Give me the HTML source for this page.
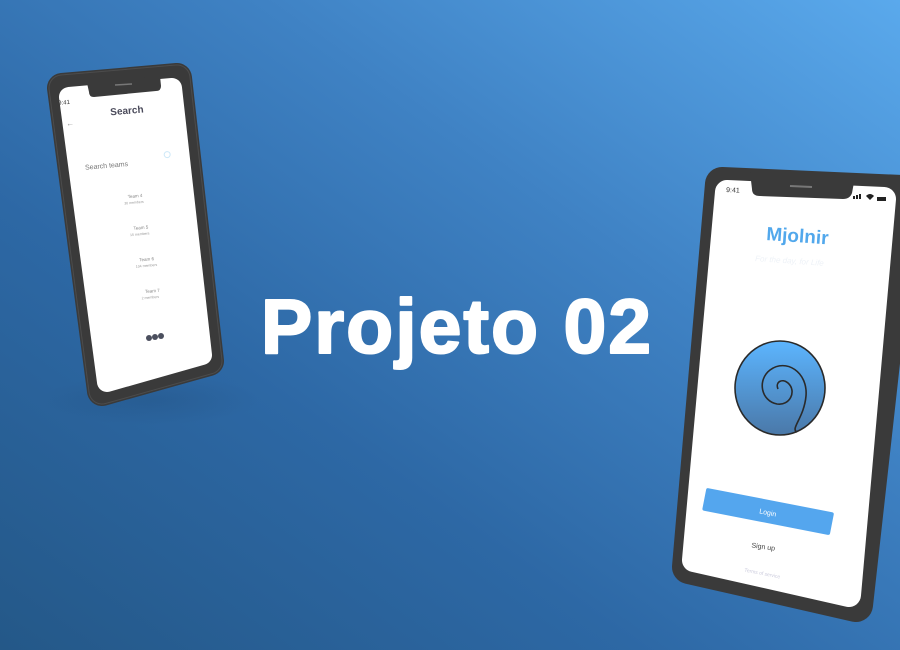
<!DOCTYPE html>
<html><head><meta charset="utf-8"><style>
html,body{margin:0;padding:0;width:900px;height:650px;overflow:hidden}
body{background:linear-gradient(215deg,#5aa9ec 0%,#3f82c4 35%,#2d68a5 65%,#245888 100%)}
svg{position:absolute;left:0;top:0}
text{font-family:"Liberation Sans",sans-serif}
</style></head><body>
<svg width="900" height="650" viewBox="0 0 900 650">
<defs>
<linearGradient id="ball" x1="0" y1="0" x2="0" y2="1">
<stop offset="0" stop-color="#5cb5ff"/><stop offset="1" stop-color="#4a78a8"/></linearGradient>
<radialGradient id="sh" cx="0.5" cy="0.5" r="0.5"><stop offset="0" stop-color="#1b3f66" stop-opacity="0.2"/><stop offset="1" stop-color="#1b3f66" stop-opacity="0"/></radialGradient>
</defs>
<ellipse cx="150" cy="400" rx="110" ry="25" fill="url(#sh)"/>
<!-- left phone -->
<polygon points="62,88 177,78 209,361 102,391" fill="#3a3a3a" stroke="#3a3a3a" stroke-width="30" stroke-linejoin="round"/>
<polygon points="62,88 177,78 209,361 102,391" fill="none" stroke="#5e5e5e" stroke-width="27" stroke-linejoin="round" stroke-opacity="0.5"/>
<polygon points="62,88 177,78 209,361 102,391" fill="#3a3a3a" stroke="#3a3a3a" stroke-width="25" stroke-linejoin="round"/>
<polygon points="69,97 172,88 202,355 107,382" fill="#fff" stroke="#fff" stroke-width="20" stroke-linejoin="round"/>
<path d="M87,83 L160,76 L161,86 Q161,91 156,91 L94,97 Q89,97 89,92 Z" fill="#3a3a3a"/>
<line x1="115" y1="85" x2="132" y2="84" stroke="#777" stroke-width="1.5"/>
<g transform="rotate(-5 130 200)" fill="#555">
<text x="67" y="99" font-size="6" fill="#333">9:41</text>
<text x="118" y="114" font-size="10" font-weight="bold" fill="#4a4a5a">Search</text>
<text x="73" y="121" font-size="8" fill="#999">←</text>
<text x="88" y="166" font-size="7" fill="#777">Search teams</text>
<circle cx="171" cy="158" r="3" fill="none" stroke="#cde8f8" stroke-width="1"/>
<text x="128" y="198" font-size="4.5" fill="#888">Team 4</text>
<text x="124" y="204" font-size="3.5" fill="#999">30 members</text>
<text x="131" y="230" font-size="4.5" fill="#888">Team 5</text>
<text x="127" y="236" font-size="3.5" fill="#999">15 members</text>
<text x="134" y="262" font-size="4.5" fill="#888">Team 6</text>
<text x="130" y="268" font-size="3.5" fill="#999">104 members</text>
<text x="137" y="294" font-size="4.5" fill="#888">Team 7</text>
<text x="133" y="300" font-size="3.5" fill="#999">2 members</text>
</g>
<circle cx="149" cy="338" r="3" fill="#4b4f5e"/><circle cx="155" cy="337" r="3" fill="#4b4f5e"/><circle cx="161" cy="336" r="3" fill="#4b4f5e"/>
<!-- title -->
<text x="457" y="353" font-size="77" font-weight="bold" fill="#fff" stroke="#fff" stroke-width="2" stroke-linejoin="round" text-anchor="middle" letter-spacing="2">Projeto 02</text>
<!-- right phone -->
<polygon points="722,184 902,192 856,605 689,567" fill="#3a3a3a" stroke="#3a3a3a" stroke-width="34" stroke-linejoin="round"/>
<polygon points="727,192 884,199 849,595 694,560" fill="#fff" stroke="#fff" stroke-width="24" stroke-linejoin="round"/>
<path d="M750,172 L855,177 L852,193 Q850,199 843,199 L760,196 Q752,196 752,189 Z" fill="#3a3a3a"/>
<line x1="790" y1="186" x2="812" y2="187" stroke="#777" stroke-width="2"/>
<text x="726" y="192" font-size="7" fill="#333" transform="rotate(3 726 192)">9:41</text>
<rect x="853" y="196" width="2" height="3" fill="#222"/><rect x="856" y="195" width="2" height="4" fill="#222"/><rect x="859" y="194" width="2" height="5" fill="#222"/>
<path d="M866,196 Q870,192 874,196 L870,200 Z" fill="#222"/>
<rect x="877" y="197" width="9" height="4" fill="#222"/>
<text x="766" y="240" font-size="19" font-weight="bold" fill="#52a8ec" transform="rotate(4 766 240)">Mjolnir</text>
<text x="755" y="261" font-size="8" fill="#eef2f7" font-style="italic" transform="rotate(4 755 261)">For the day, for Life</text>
<ellipse cx="780" cy="388" rx="45" ry="47" fill="url(#ball)" stroke="#2a2a2a" stroke-width="1.6"/>
<path d="M778,389 C775,382 782,378 788,383 C797,391 790,406 777,404 C761,401 757,380 770,370 C786,358 808,372 806,396 C804,418 790,429 797,432" fill="none" stroke="#2a2a2a" stroke-width="1.6"/>
<g transform="rotate(11 768 512)">
<rect x="703" y="500" width="130" height="23" rx="2" fill="#54a6ee"/>
<text x="768" y="515" font-size="7" fill="#fff" text-anchor="middle">Login</text>
</g>
<text x="763" y="549" font-size="7" fill="#444" text-anchor="middle" transform="rotate(8 763 549)">Sign up</text>
<text x="762" y="575" font-size="5" fill="#ccd" text-anchor="middle" transform="rotate(11 762 575)">Terms of service</text>
</svg>
</body></html>
